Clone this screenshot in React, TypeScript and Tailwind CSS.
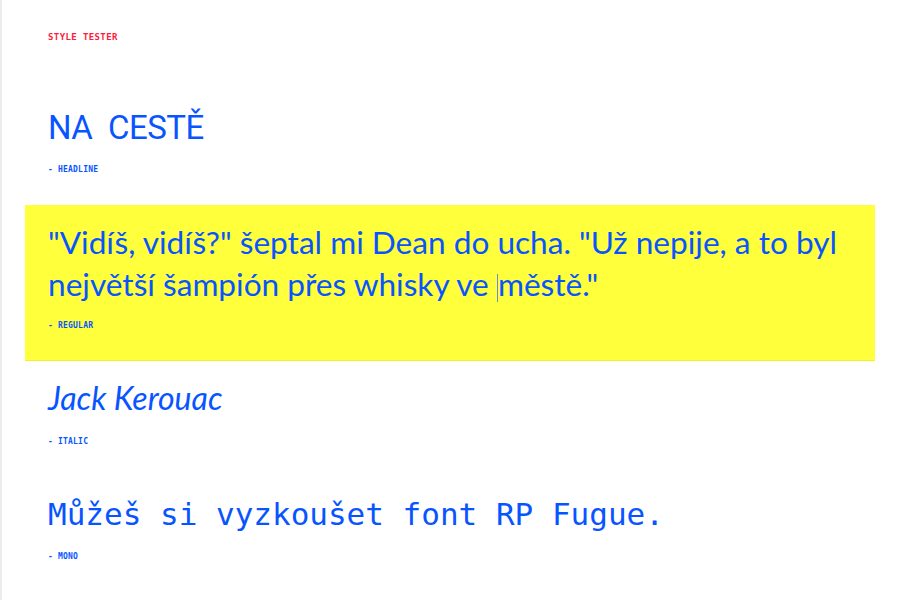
import React from "react";

function Label({ children }: { children: React.ReactNode }) {
  return (
    <div
      className="text-[8px] leading-[10px] font-bold tracking-[0.2px] text-[#0a55ff]"
      style={{ fontFamily: '"DejaVu Sans Mono", monospace' }}
    >
      - {children}
    </div>
  );
}

export default function App() {
  return (
    <div className="w-[900px] h-[600px] bg-white border-l-2 border-[#ececec] overflow-hidden">
      <div className="pl-[23px] pr-[25px]">
        <div className="px-[23px] pt-[31px]">
          <div
            className="text-[9px] leading-[12px] font-bold tracking-[0.4px] text-[#ff1a3c]"
            style={{ fontFamily: '"DejaVu Sans Mono", monospace' }}
          >
            STYLE TESTER
          </div>
        </div>
        <div className="px-[23px] pt-[67px]">
          <div
            className="text-[33px] leading-[36px] text-[#0855ff] tracking-[-0.5px] [word-spacing:8px]"
            style={{ fontFamily: 'Roboto, sans-serif' }}
          >
            NA CESTĚ
          </div>
          <div className="pt-[19px]">
            <Label>HEADLINE</Label>
          </div>
        </div>
        <div className="mt-[30px] bg-[#ffff3c] border-b border-[#f2f02a] px-[23px] pt-[16px] h-[156px]">
          <div
            className="text-[31.6px] leading-[42px] text-[#0855ff]"
            style={{ fontFamily: 'Lato, sans-serif' }}
          >
            "Vidíš, vidíš?" šeptal mi Dean do ucha. "Už nepije, a to byl
            <br />
            největší šampión přes whisky ve{" "}
            <span className="inline-block w-0 h-[28px] border-l border-[#6b8bd6] align-[-6px]" />
            městě."
          </div>
          <div className="pt-[16px]">
            <Label>REGULAR</Label>
          </div>
        </div>
        <div className="px-[23px] pt-[17px]">
          <div
            className="text-[32px] leading-[40px] italic text-[#0855ff]"
            style={{ fontFamily: 'Lato, sans-serif' }}
          >
            Jack Kerouac
          </div>
          <div className="pt-[19px]">
            <Label>ITALIC</Label>
          </div>
        </div>
        <div className="px-[23px] pt-[49px]">
          <div
            className="text-[31px] leading-[36px] text-[#0855ff]"
            style={{ fontFamily: '"DejaVu Sans Mono", monospace' }}
          >
            Můžeš si vyzkoušet font RP Fugue.
          </div>
          <div className="pt-[20px]">
            <Label>MONO</Label>
          </div>
        </div>
      </div>
    </div>
  );
}
